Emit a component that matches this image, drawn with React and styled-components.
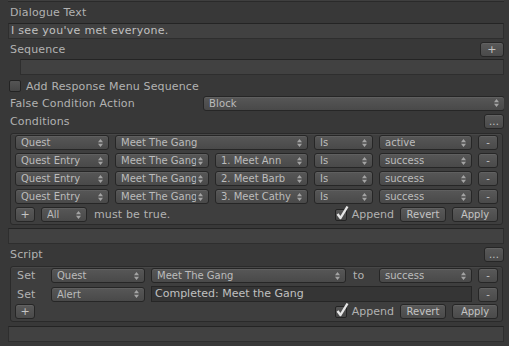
import styled, { createGlobalStyle } from "styled-components";

const GlobalStyle = createGlobalStyle`
  html, body {
    margin: 0;
    padding: 0;
    background: #383838;
  }
  body {
    font-family: "DejaVu Sans", "Liberation Sans", sans-serif;
    font-size: 11px;
    color: #b2b2b2;
  }
`;

const Page = styled.div`
  width: 496px;
  height: 346px;
  padding-left: 8px;
  display: flex;
  flex-direction: column;
  overflow: hidden;
`;

const TopEdge = styled.div`
  height: 1px;
  background: #3f3f3f;
  border-bottom: 1px solid #2a2a2a;
`;

const Label = styled.div`
  height: 16px;
  line-height: 16px;
  padding-left: 2px;
  margin-top: ${(p) => p.$top || 0}px;
  letter-spacing: 0.15px;
  white-space: nowrap;
`;

const HeaderRow = styled.div`
  height: 16px;
  margin-top: ${(p) => p.$top || 0}px;
  display: flex;
  align-items: center;
  justify-content: space-between;
  padding-left: 2px;
  letter-spacing: 0.15px;
`;

const TextField = styled.div`
  box-sizing: border-box;
  height: 16px;
  margin-top: ${(p) => p.$top || 0}px;
  margin-left: ${(p) => p.$indent || 0}px;
  padding-left: 2px;
  line-height: 14px;
  background: #414141;
  border: 1px solid #2e2e2e;
  border-top-color: #242424;
  color: #c0c0c0;
  letter-spacing: ${(p) => p.$spacing || 0}px;
  white-space: nowrap;
  overflow: hidden;
`;

const InlineField = styled.div`
  box-sizing: border-box;
  height: 16px;
  padding-left: 3px;
  line-height: 14px;
  background: #353535;
  border: 1px solid #262626;
  color: #c0c0c0;
  white-space: nowrap;
  overflow: hidden;
`;

const MiniButton = styled.div`
  box-sizing: border-box;
  width: ${(p) => p.$w || 20}px;
  height: 15px;
  flex: none;
  display: flex;
  align-items: center;
  justify-content: center;
  font-size: ${(p) => p.$size || 10}px;
  line-height: 13px;
  color: #c4c4c4;
  background: linear-gradient(#595959, #4a4a4a);
  border: 1px solid #262626;
  border-radius: 3px;
  box-shadow: inset 0 1px 0 rgba(255, 255, 255, 0.06);
`;

const PopupBox = styled.div`
  box-sizing: border-box;
  height: 15px;
  min-width: 0;
  display: flex;
  align-items: center;
  justify-content: space-between;
  gap: 2px;
  padding: 0 5px 0 5px;
  font-size: 10px;
  line-height: 13px;
  color: #bcbcbc;
  background: linear-gradient(#575757, #494949);
  border: 1px solid #262626;
  border-radius: 3px;
  box-shadow: inset 0 1px 0 rgba(255, 255, 255, 0.06);
  white-space: nowrap;
  overflow: hidden;
`;

const PopupText = styled.span`
  overflow: hidden;
  min-width: 0;
`;

const Arrows = () => (
  <svg width="5" height="8" viewBox="0 0 5 8" style={{ flex: "none" }}>
    <path d="M0 3.3 L2.5 0 L5 3.3 Z M0 4.7 L2.5 8 L5 4.7 Z" fill="#a4a4a4" />
  </svg>
);

const Popup = ({ children }) => (
  <PopupBox>
    <PopupText>{children}</PopupText>
    <Arrows />
  </PopupBox>
);

const FormRow = styled.div`
  height: 16px;
  margin-top: ${(p) => p.$top || 0}px;
  display: grid;
  grid-template-columns: ${(p) => p.$cols};
  align-items: center;
  padding-left: ${(p) => p.$pad || 0}px;
  letter-spacing: 0.15px;
`;

const ToggleRow = styled.label`
  display: flex;
  align-items: center;
  gap: 5px;
  white-space: nowrap;
`;

const BoxMark = styled.span`
  position: relative;
  box-sizing: border-box;
  width: 12px;
  height: 12px;
  flex: none;
  background: linear-gradient(#555555, #464646);
  border: 1px solid #232323;
  border-radius: 2px;
`;

const Tick = styled.svg`
  position: absolute;
  left: 0px;
  top: -5px;
`;

const CheckBox = ({ checked }) => (
  <BoxMark>
    {checked && (
      <Tick width="13" height="15" viewBox="0 0 13 15">
        <path
          d="M1.5 9 L4.5 13 L11.5 1.5"
          stroke="#e6e6e6"
          strokeWidth="2.4"
          fill="none"
          strokeLinejoin="round"
        />
      </Tick>
    )}
  </BoxMark>
);

const GroupBox = styled.div`
  box-sizing: border-box;
  width: 493px;
  margin: ${(p) => p.$top || 0}px 0 0 2px;
  padding: 1px 4px 2px 4px;
  background: #3e3e3e;
  border: 1px solid #2a2a2a;
  border-radius: 3px;
  box-shadow: inset 0 1px 0 rgba(255, 255, 255, 0.05);
  display: flex;
  flex-direction: column;
  gap: 3px;
`;

const GridRow = styled.div`
  height: 15px;
  display: grid;
  grid-template-columns: ${(p) => p.$cols};
  column-gap: 6px;
  align-items: center;
`;

const FooterRow = styled.div`
  height: 15px;
  display: flex;
  align-items: center;
  gap: 6px;
`;

const FooterText = styled.span`
  margin-left: 1px;
  white-space: nowrap;
  letter-spacing: 0.15px;
`;

const Spacer = styled.div`
  flex: 1;
`;

const CellText = styled.span`
  padding-left: ${(p) => p.$pad || 0}px;
  white-space: nowrap;
  letter-spacing: 0.15px;
`;

const Actions = () => (
  <>
    <ToggleRow>
      <CheckBox checked />
      Append
    </ToggleRow>
    <MiniButton $w={46}>Revert</MiniButton>
    <MiniButton $w={46}>Apply</MiniButton>
  </>
);

const conditions = [
  ["Quest Entry", "1. Meet Ann"],
  ["Quest Entry", "2. Meet Barb"],
  ["Quest Entry", "3. Meet Cathy"],
];

export default function App() {
  return (
    <>
      <GlobalStyle />
      <Page>
        <TopEdge />
        <Label $top={3}>Dialogue Text</Label>
        <TextField $top={2} $spacing={0.3}>
          I see you've met everyone.
        </TextField>
        <HeaderRow $top={2}>
          <span>Sequence</span>
          <MiniButton $w={24} $size={11}>+</MiniButton>
        </HeaderRow>
        <TextField $top={2} $indent={12} />
        <FormRow $top={3} $cols="1fr" $pad={1}>
          <ToggleRow>
            <CheckBox />
            Add Response Menu Sequence
          </ToggleRow>
        </FormRow>
        <FormRow $top={1} $cols="193px 302px" $pad={2}>
          <span>False Condition Action</span>
          <Popup>Block</Popup>
        </FormRow>
        <HeaderRow $top={2}>
          <span>Conditions</span>
          <MiniButton $w={20}>...</MiniButton>
        </HeaderRow>

        <GroupBox $top={4}>
          <GridRow $cols="94px 193px 59px 93px 20px">
            <Popup>Quest</Popup>
            <Popup>Meet The Gang</Popup>
            <Popup>Is</Popup>
            <Popup>active</Popup>
            <MiniButton>-</MiniButton>
          </GridRow>
          {conditions.map(([kind, entry]) => (
            <GridRow key={entry} $cols="94px 94px 93px 59px 93px 20px">
              <Popup>{kind}</Popup>
              <Popup>Meet The Gang</Popup>
              <Popup>{entry}</Popup>
              <Popup>Is</Popup>
              <Popup>success</Popup>
              <MiniButton>-</MiniButton>
            </GridRow>
          ))}
          <FooterRow>
            <MiniButton $size={11}>+</MiniButton>
            <PopupBox style={{ width: 46 }}>
              <PopupText>All</PopupText>
              <Arrows />
            </PopupBox>
            <FooterText>must be true.</FooterText>
            <Spacer />
            <Actions />
          </FooterRow>
        </GroupBox>

        <TextField $top={3} />
        <HeaderRow $top={2}>
          <span>Script</span>
          <MiniButton $w={20}>...</MiniButton>
        </HeaderRow>

        <GroupBox $top={4}>
          <GridRow $cols="30px 94px 195px 21px 93px 20px">
            <CellText $pad={2}>Set</CellText>
            <Popup>Quest</Popup>
            <Popup>Meet The Gang</Popup>
            <CellText $pad={1}>to</CellText>
            <Popup>success</Popup>
            <MiniButton>-</MiniButton>
          </GridRow>
          <GridRow $cols="30px 94px 1fr 20px">
            <CellText $pad={2}>Set</CellText>
            <Popup>Alert</Popup>
            <InlineField>Completed: Meet the Gang</InlineField>
            <MiniButton>-</MiniButton>
          </GridRow>
          <FooterRow>
            <MiniButton $size={11}>+</MiniButton>
            <Spacer />
            <Actions />
          </FooterRow>
        </GroupBox>

        <TextField $top={4} />
      </Page>
    </>
  );
}
